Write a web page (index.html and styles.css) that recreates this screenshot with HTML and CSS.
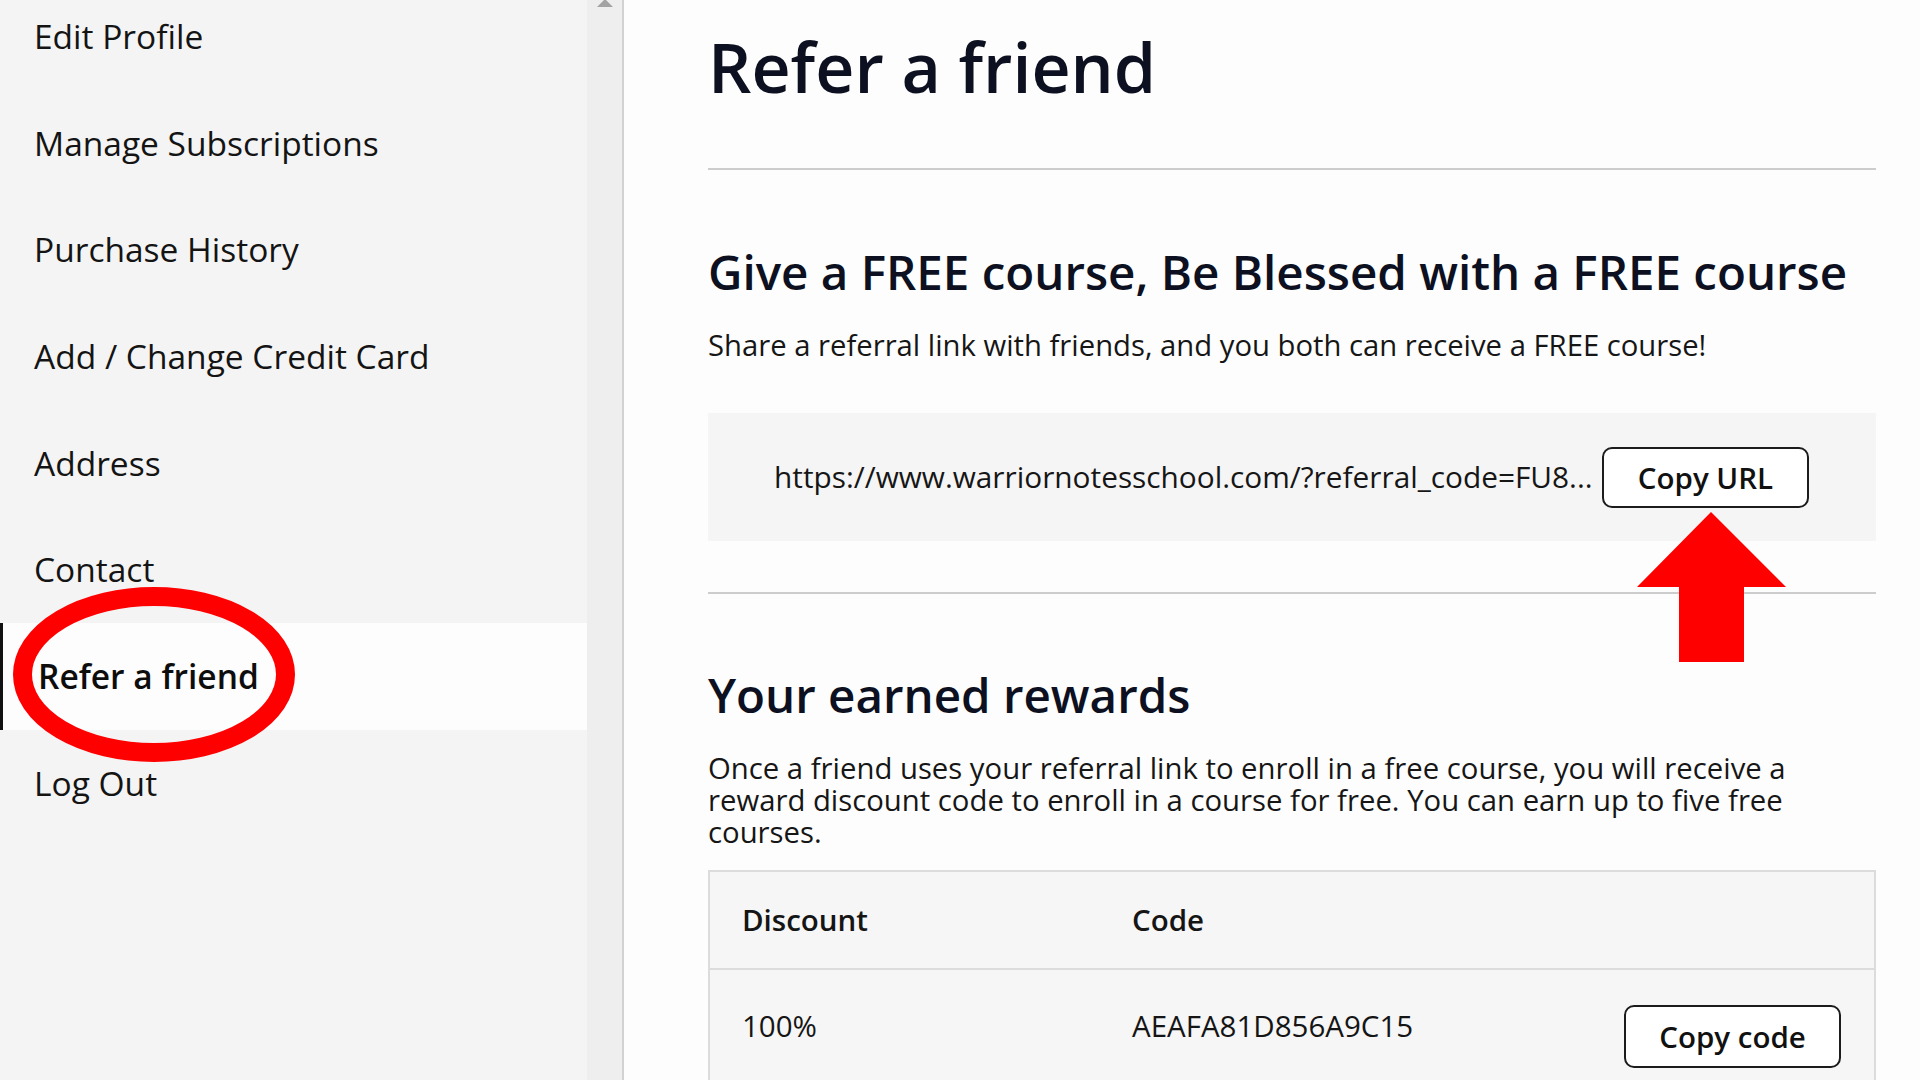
FILE: index.html
```html
<!DOCTYPE html>
<html lang="en">
<head>
<meta charset="utf-8">
<title>Refer a friend</title>
<link rel="stylesheet" href="styles.css">
</head>
<body>
<div class="page">
  <aside class="sidebar">
    <nav class="nav">
      <a class="nav-item">Edit Profile</a>
      <a class="nav-item">Manage Subscriptions</a>
      <a class="nav-item">Purchase History</a>
      <a class="nav-item">Add / Change Credit Card</a>
      <a class="nav-item">Address</a>
      <a class="nav-item">Contact</a>
      <a class="nav-item active">Refer a friend</a>
      <a class="nav-item">Log Out</a>
    </nav>
  </aside>
  <div class="scrolltrack"><span class="scroll-arrow"></span></div>
  <main class="main">
    <h1 class="title">Refer a friend</h1>
    <hr class="rule">
    <h2 class="section-title">Give a FREE course, Be Blessed with a FREE course</h2>
    <p class="lead">Share a referral link with friends, and you both can receive a FREE course!</p>
    <div class="url-box">
      <span class="url-text">https://www.warriornotesschool.com/?referral_code=FU8...</span>
      <button class="btn btn-url">Copy URL</button>
    </div>
    <hr class="rule rule-2">
    <h2 class="section-title second">Your earned rewards</h2>
    <p class="desc">Once a friend uses your referral link to enroll in a free course, you will receive a reward discount code to enroll in a course for free. You can earn up to five free courses.</p>
    <table class="rewards">
      <colgroup><col class="c1"><col class="c2"><col class="c3"></colgroup>
      <thead>
        <tr><th>Discount</th><th>Code</th><th></th></tr>
      </thead>
      <tbody>
        <tr><td>100%</td><td>AEAFA81D856A9C15</td><td class="btn-cell"><button class="btn btn-code">Copy code</button></td></tr>
      </tbody>
    </table>
  </main>
</div>
<svg class="annotations" width="1920" height="1080" viewBox="0 0 1920 1080" aria-hidden="true">
  <ellipse cx="154" cy="674.5" rx="131.5" ry="78" fill="none" stroke="#ff0000" stroke-width="19"/>
  <polygon points="1711,512 1786,587 1744,587 1744,662 1679,662 1679,587 1637,587" fill="#ff0000"/>
</svg>
</body>
</html>
```
FILE: styles.css
```css
* { box-sizing: border-box; }
html, body {
  margin: 0;
  padding: 0;
  width: 1920px;
  height: 1080px;
  overflow: hidden;
}
body {
  font-family: "Open Sans", "Noto Sans", sans-serif;
  color: #151515;
  background: #fdfdfd;
  position: relative;
}
.page {
  display: flex;
  height: 1080px;
}
.sidebar {
  flex: none;
  width: 587px;
  background: #f4f4f4;
  overflow: hidden;
}
.nav {
  display: flex;
  flex-direction: column;
  margin-top: -17px;
}
.nav-item {
  display: block;
  height: 106.67px;
  line-height: 106.67px;
  padding-left: 34px;
  font-size: 33.5px;
  color: #141414;
  white-space: nowrap;
}
.nav-item.active {
  background: #fdfdfd;
  border-left: 3px solid #111;
  padding-left: 35px;
  font-weight: 600;
  color: #0d0d0d;
}
.scrolltrack {
  flex: none;
  width: 37px;
  background: #eeeeee;
  border-right: 2px solid #d2d2d2;
  display: flex;
  justify-content: center;
}
.scroll-arrow {
  width: 0;
  height: 0;
  border-left: 8px solid transparent;
  border-right: 8px solid transparent;
  border-bottom: 8px solid #a3a3a3;
  margin-top: -1px;
}
.main {
  flex: 1;
  min-width: 0;
  padding: 27px 44px 0 84px;
  background: #fdfdfd;
  overflow: hidden;
}
.title {
  margin: 0;
  font-size: 68px;
  line-height: 80px;
  font-weight: 600;
  color: #0c1020;
  letter-spacing: 0;
}
.rule {
  margin: 61px 0 0;
  border: 0;
  height: 2px;
  background: #cdcdcd;
}
.section-title {
  margin: 74px 0 0;
  font-size: 47.5px;
  line-height: 56px;
  font-weight: 600;
  color: #0c1020;
  white-space: nowrap;
}
.section-title.second {
  margin-top: 73px;
}
.lead {
  margin: 24.5px 0 0;
  font-size: 29.25px;
  line-height: 40px;
  color: #161616;
}
.url-box {
  margin-top: 48.5px;
  display: flex;
  align-items: center;
  background: #f5f5f5;
  padding: 33.5px 67px 33.5px 66px;
}
.url-text {
  flex: 1;
  min-width: 0;
  white-space: nowrap;
  overflow: hidden;
  font-size: 29.8px;
  line-height: 40px;
  color: #161616;
}
.btn {
  flex: none;
  font-family: "Open Sans", "Noto Sans", sans-serif;
  font-size: 29.5px;
  font-weight: 600;
  color: #111;
  background: #fff;
  border: 2px solid #1c1c1c;
  border-radius: 10px;
  padding: 0;
  white-space: nowrap;
  text-align: center;
  cursor: pointer;
}
.btn-url {
  width: 207px;
  height: 61px;
}
.rule-2 {
  margin-top: 51px;
}
.desc {
  margin: 29px 0 0;
  font-size: 29.3px;
  line-height: 32px;
  color: #161616;
}
.rewards {
  margin-top: 21.5px;
  width: 100%;
  border-collapse: collapse;
  table-layout: fixed;
  border: 2px solid #dcdcdc;
  background: #f6f6f6;
  font-size: 29.5px;
  color: #151515;
}
.c1 { width: 391px; }
.c3 { width: 290px; }
.rewards th {
  text-align: left;
  font-weight: 600;
  padding: 26px 32px;
  line-height: 44px;
  border-bottom: 2px solid #dcdcdc;
}
.rewards td {
  vertical-align: top;
  padding: 34px 32px 40px;
  line-height: 44px;
}
.rewards td.btn-cell {
  text-align: right;
  padding: 35px 33px 40px 0;
}
.btn-code {
  width: 217px;
  height: 63px;
}
.annotations {
  position: absolute;
  left: 0;
  top: 0;
  pointer-events: none;
}
```
